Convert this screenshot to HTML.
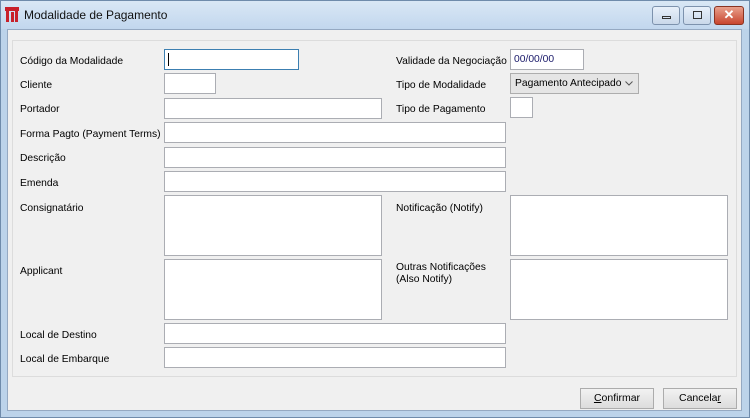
<!DOCTYPE html><html><head><style>
*{box-sizing:border-box}
body{margin:0;width:750px;height:418px;overflow:hidden;font-family:"Liberation Sans",sans-serif;font-size:10px;color:#000}
.win{position:absolute;left:0;top:0;width:750px;height:418px;background:#bcd3ea;outline:1px solid #6f8bab;outline-offset:-1px}
.title{position:absolute;left:1px;top:1px;width:748px;height:28px;background:linear-gradient(#d9e7f5,#c2d7ee)}
.title span{position:absolute;left:23px;top:7px;font-size:12px;color:#111}
.body{position:absolute;left:7px;top:29px;width:735px;height:382px;background:#f0f0f0;border:1px solid #95a9c2}
.panel{position:absolute;left:12px;top:40px;width:725px;height:337px;border:1px solid #dcdcdc;background:#f0f0f0}
.l{position:absolute;font-size:10.3px;white-space:nowrap;margin-top:2px}
.i{position:absolute;background:#fff;border:1px solid #abadb3;height:21px;font-size:10.3px;line-height:19px}
.b{position:absolute;height:21px;width:74px;background:linear-gradient(#f2f2f2,#dcdcdc);border:1px solid #acacac;text-align:center;line-height:19px;font-size:10.5px}
.tb{position:absolute;top:5px;height:19px;border:1px solid #7d92ad;border-radius:3px;background:linear-gradient(#e8f0fa,#c9d8ea)}
</style></head><body><div class="win">
<div class="title">
<svg style="position:absolute;left:4px;top:6px" width="14" height="15"><rect x="0" y="0" width="14" height="4" fill="#c8202a"/><rect x="1" y="4" width="3" height="11" fill="#c8202a"/><rect x="6" y="5" width="3" height="10" fill="#c8202a"/><rect x="10" y="4" width="3" height="11" fill="#c8202a"/></svg>
<span>Modalidade de Pagamento</span>
<div class="tb" style="left:651px;width:28px"><div style="position:absolute;left:9px;top:9px;width:9px;height:3px;border:1px solid #333"></div></div>
<div class="tb" style="left:682px;width:28px"><div style="position:absolute;left:9px;top:4px;width:9px;height:8px;border:1px solid #333"></div></div>
<div class="tb" style="left:713px;width:30px;background:linear-gradient(#e9a08c,#c8452f);border-color:#8a3322;color:#fff;font-weight:bold;text-align:center;line-height:16px;font-size:13px">✕</div>
</div>
<div class="body"></div>
<div class="panel"></div>
<div class="l" style="left:20px;top:54px">Código da Modalidade</div>
<div class="i" style="left:164px;top:49px;width:135px;border-color:#3c7fb1"><div style="position:absolute;left:3px;top:3px;width:1px;height:13px;background:#000"></div></div>
<div class="l" style="left:20px;top:78px">Cliente</div>
<div class="i" style="left:164px;top:73px;width:52px"></div>
<div class="l" style="left:20px;top:102px">Portador</div>
<div class="i" style="left:164px;top:98px;width:218px"></div>
<div class="l" style="left:20px;top:127px">Forma Pagto (Payment Terms)</div>
<div class="i" style="left:164px;top:122px;width:342px"></div>
<div class="l" style="left:20px;top:151px">Descrição</div>
<div class="i" style="left:164px;top:147px;width:342px"></div>
<div class="l" style="left:20px;top:176px">Emenda</div>
<div class="i" style="left:164px;top:171px;width:342px"></div>
<div class="l" style="left:20px;top:201px">Consignatário</div>
<div class="i" style="left:164px;top:195px;width:218px;height:61px"></div>
<div class="l" style="left:20px;top:264px">Applicant</div>
<div class="i" style="left:164px;top:259px;width:218px;height:61px"></div>
<div class="l" style="left:20px;top:328px">Local de Destino</div>
<div class="i" style="left:164px;top:323px;width:342px"></div>
<div class="l" style="left:20px;top:352px">Local de Embarque</div>
<div class="i" style="left:164px;top:347px;width:342px"></div>
<div class="l" style="left:396px;top:54px">Validade da Negociação</div>
<div class="i" style="left:510px;top:49px;width:74px;color:#1a1a6a;padding-left:3px">00/00/00</div>
<div class="l" style="left:396px;top:78px">Tipo de Modalidade</div>
<div class="i" style="left:510px;top:73px;width:129px;background:#e5e5e5;border-color:#adadad;padding-left:4px">Pagamento Antecipado<svg style="position:absolute;right:5px;top:7px" width="8" height="5"><path d="M0.5 0.5L4 4L7.5 0.5" fill="none" stroke="#555"/></svg></div>
<div class="l" style="left:396px;top:102px">Tipo de Pagamento</div>
<div class="i" style="left:510px;top:97px;width:23px"></div>
<div class="l" style="left:396px;top:201px">Notificação (Notify)</div>
<div class="i" style="left:510px;top:195px;width:218px;height:61px"></div>
<div class="l" style="left:396px;top:260px;line-height:12px">Outras Notificações<br>(Also Notify)</div>
<div class="i" style="left:510px;top:259px;width:218px;height:61px"></div>
<div class="b" style="left:580px;top:388px"><u>C</u>onfirmar</div>
<div class="b" style="left:663px;top:388px">Cancela<u>r</u></div>
</div></body></html>
